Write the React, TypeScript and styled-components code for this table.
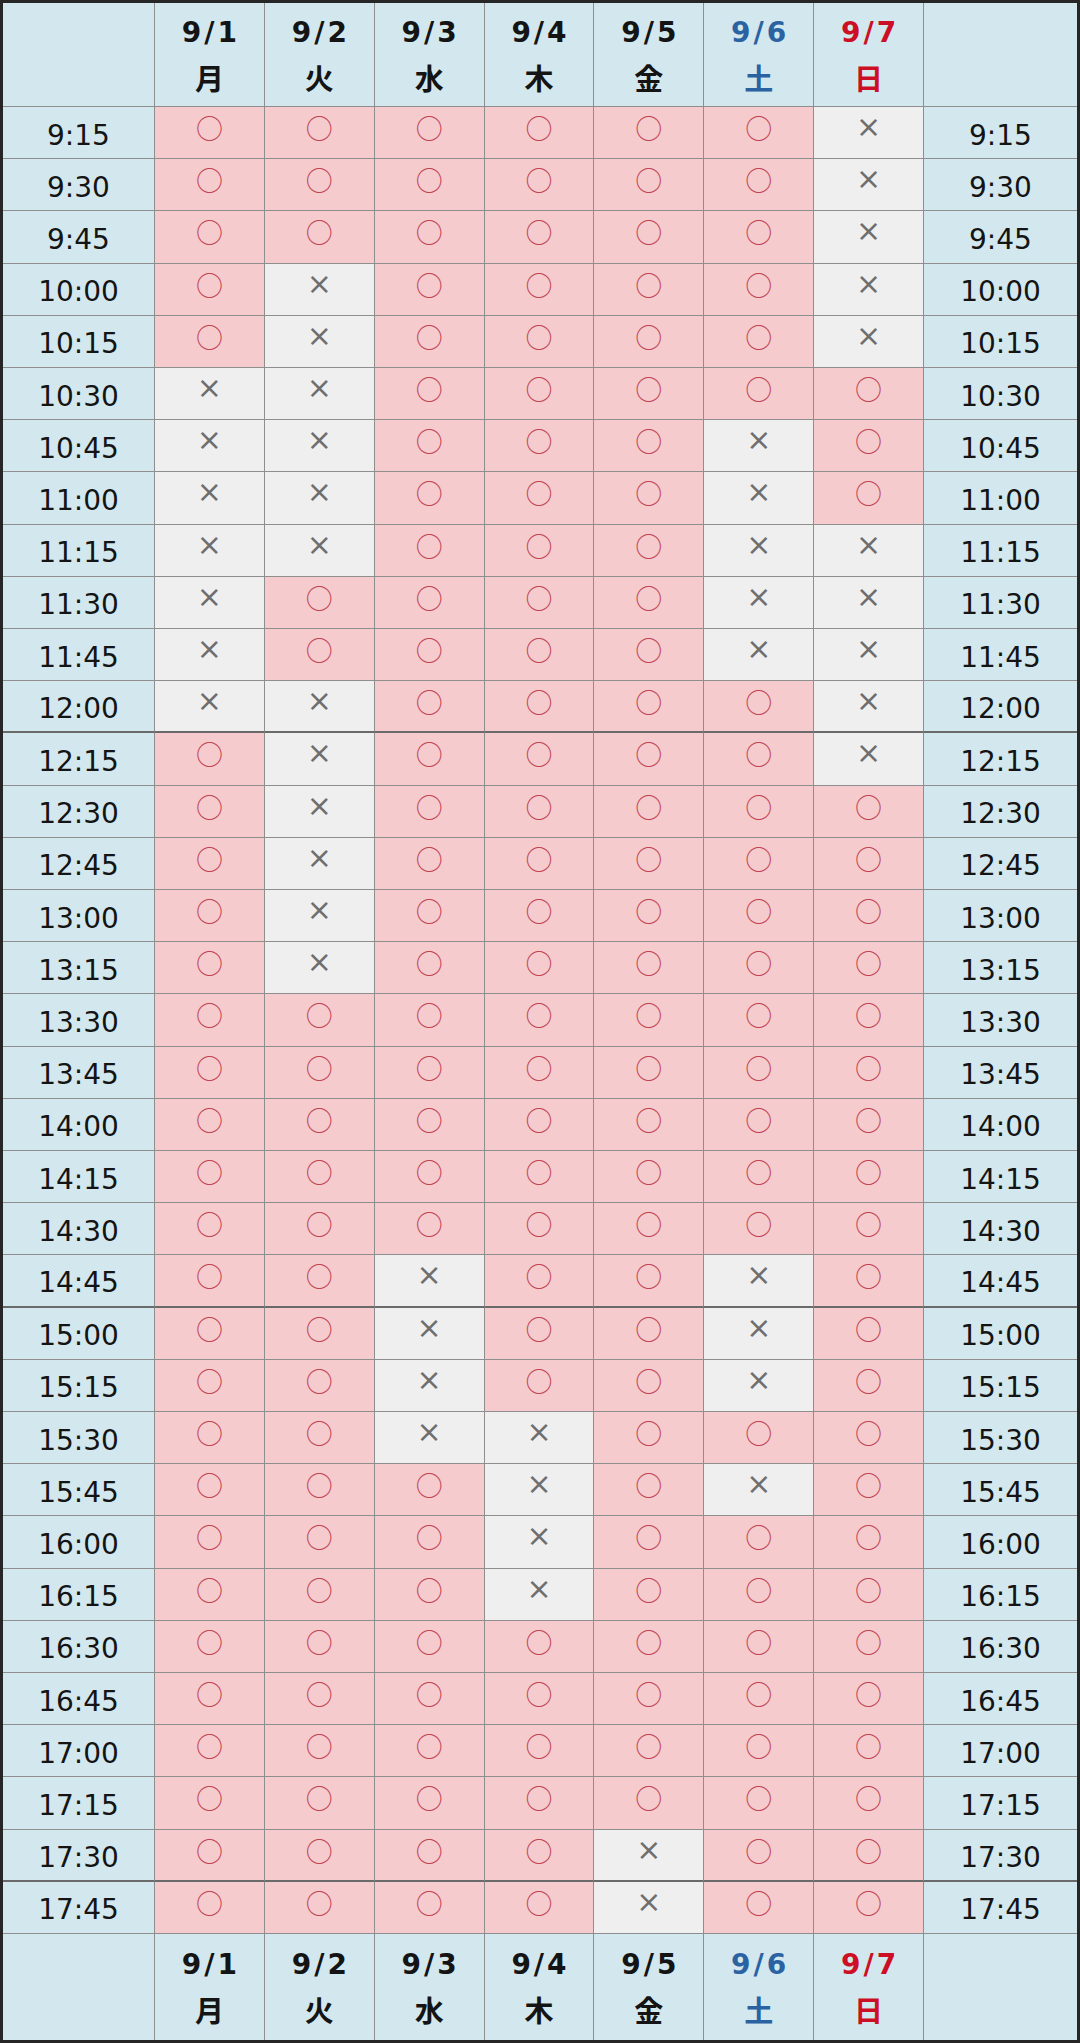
import React from "react";
import styled, { createGlobalStyle, css } from "styled-components";

const GlobalStyle = createGlobalStyle`
  html, body {
    margin: 0;
    padding: 0;
    background: #ffffff;
  }
  body {
    font-family: "DejaVu Sans", "Noto Sans CJK JP", sans-serif;
  }
`;

type Tone = "weekday" | "sat" | "sun";

const days: { date: string; wd: string; tone: Tone }[] = [
  { date: "9/1", wd: "月", tone: "weekday" },
  { date: "9/2", wd: "火", tone: "weekday" },
  { date: "9/3", wd: "水", tone: "weekday" },
  { date: "9/4", wd: "木", tone: "weekday" },
  { date: "9/5", wd: "金", tone: "weekday" },
  { date: "9/6", wd: "土", tone: "sat" },
  { date: "9/7", wd: "日", tone: "sun" },
];

// o = 空きあり, x = 満席
const slots: [string, string][] = [
  ["9:15", "oooooox"],
  ["9:30", "oooooox"],
  ["9:45", "oooooox"],
  ["10:00", "oxoooox"],
  ["10:15", "oxoooox"],
  ["10:30", "xxooooo"],
  ["10:45", "xxoooxo"],
  ["11:00", "xxoooxo"],
  ["11:15", "xxoooxx"],
  ["11:30", "xooooxx"],
  ["11:45", "xooooxx"],
  ["12:00", "xxoooox"],
  ["12:15", "oxoooox"],
  ["12:30", "oxooooo"],
  ["12:45", "oxooooo"],
  ["13:00", "oxooooo"],
  ["13:15", "oxooooo"],
  ["13:30", "ooooooo"],
  ["13:45", "ooooooo"],
  ["14:00", "ooooooo"],
  ["14:15", "ooooooo"],
  ["14:30", "ooooooo"],
  ["14:45", "ooxooxo"],
  ["15:00", "ooxooxo"],
  ["15:15", "ooxooxo"],
  ["15:30", "ooxxooo"],
  ["15:45", "oooxoxo"],
  ["16:00", "oooxooo"],
  ["16:15", "oooxooo"],
  ["16:30", "ooooooo"],
  ["16:45", "ooooooo"],
  ["17:00", "ooooooo"],
  ["17:15", "ooooooo"],
  ["17:30", "ooooxoo"],
  ["17:45", "ooooxoo"],
];

const breakAfter = new Set(["12:00", "14:45", "17:30"]);

const toneColor: Record<Tone, string> = {
  weekday: "#141414",
  sat: "#2b62a2",
  sun: "#cc0f24",
};

const Board = styled.div`
  box-sizing: border-box;
  width: 1080px;
  height: 2043px;
  border: 3px solid #262626;
  display: grid;
  grid-template-columns: 152px repeat(7, 1fr) 153px;
  grid-template-rows: 104px repeat(35, 1fr) 106px;
  background: #d3e8ee;
`;

const cellBase = css<{ $last?: boolean; $sep?: boolean; $bottom?: boolean }>`
  box-sizing: border-box;
  min-width: 0;
  border-right: ${(p) => (p.$last ? "none" : "1px solid #8e8e8e")};
  border-bottom: ${(p) =>
    p.$bottom ? "none" : p.$sep ? "2px solid #6a6a6a" : "1px solid #8e8e8e"};
`;

const HeadCell = styled.div<{ $last?: boolean; $bottom?: boolean }>`
  ${cellBase};
  background: #d3e8ee;
  display: flex;
  flex-direction: column;
  align-items: center;
  justify-content: center;
`;

const DateText = styled.div<{ $tone: Tone }>`
  font-family: "DejaVu Sans", sans-serif;
  font-weight: bold;
  font-size: 28px;
  letter-spacing: 3px;
  padding-left: 3px;
  line-height: 45px;
  color: ${(p) => toneColor[p.$tone]};
`;

const DayText = styled.div<{ $tone: Tone }>`
  font-family: "Noto Sans CJK JP", sans-serif;
  font-weight: bold;
  font-size: 29px;
  line-height: 45px;
  color: ${(p) => toneColor[p.$tone]};
`;

const TimeCell = styled.div<{ $last?: boolean; $sep?: boolean }>`
  ${cellBase};
  background: #d3e8ee;
  display: flex;
  align-items: center;
  justify-content: center;
  padding-top: 5px;
  font-family: "DejaVu Sans", sans-serif;
  font-size: 28px;
  color: #141414;
`;

const SlotCell = styled.div<{ $ok: boolean; $sep?: boolean }>`
  ${cellBase};
  background: ${(p) => (p.$ok ? "#f5cbcd" : "#efefef")};
  display: flex;
  justify-content: center;
  align-items: flex-start;
`;

const Mark = styled.span<{ $ok: boolean }>`
  font-family: ${(p) => (p.$ok ? '"Noto Sans CJK JP"' : '"DejaVu Sans"')}, sans-serif;
  font-size: ${(p) => (p.$ok ? "27px" : "30px")};
  line-height: 1;
  margin-top: ${(p) => (p.$ok ? "7px" : "5px")};
  color: ${(p) => (p.$ok ? "#c24454" : "#6e6e6e")};
`;

function HeaderRow({ bottom }: { bottom?: boolean }) {
  return (
    <>
      <HeadCell $bottom={bottom} />
      {days.map((d) => (
        <HeadCell key={d.date} $bottom={bottom}>
          <DateText $tone={d.tone}>{d.date}</DateText>
          <DayText $tone={d.tone}>{d.wd}</DayText>
        </HeadCell>
      ))}
      <HeadCell $last $bottom={bottom} />
    </>
  );
}

export default function App() {
  return (
    <>
      <GlobalStyle />
      <Board>
        <HeaderRow />
        {slots.map(([time, marks]) => {
          const sep = breakAfter.has(time);
          return (
            <React.Fragment key={time}>
              <TimeCell $sep={sep}>{time}</TimeCell>
              {marks.split("").map((m, i) => (
                <SlotCell key={i} $ok={m === "o"} $sep={sep}>
                  <Mark $ok={m === "o"}>{m === "o" ? "○" : "×"}</Mark>
                </SlotCell>
              ))}
              <TimeCell $last $sep={sep}>
                {time}
              </TimeCell>
            </React.Fragment>
          );
        })}
        <HeaderRow bottom />
      </Board>
    </>
  );
}
